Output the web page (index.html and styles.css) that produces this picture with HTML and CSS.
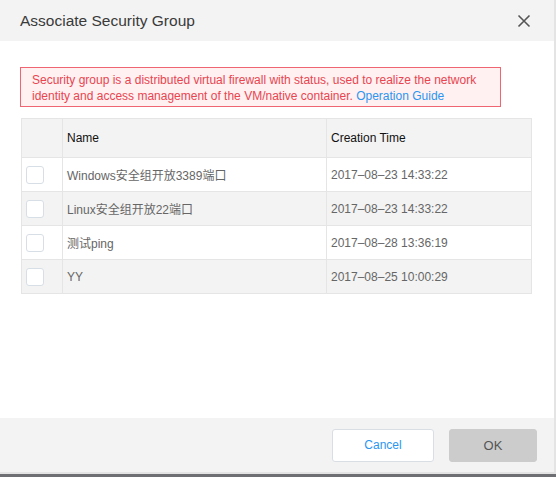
FILE: index.html
```html
<!DOCTYPE html>
<html>
<head>
<meta charset="utf-8">
<link rel="stylesheet" href="styles.css">
</head>
<body>
<div class="dialog">
  <div class="header">
    <span class="title">Associate Security Group</span>
    <svg class="close" width="14" height="14" viewBox="0 0 14 14"><path d="M1.5 1.5 L12.5 12.5 M12.5 1.5 L1.5 12.5" stroke="#555" stroke-width="1.6" fill="none"/></svg>
  </div>
  <div class="content">
    <p class="alert">Security group is a distributed virtual firewall with status, used to realize the network identity and access management of the VM/native container. <a class="link">Operation Guide</a></p>
    <div class="table">
      <div class="row head">
        <div class="cell chk"></div>
        <div class="cell name">Name</div>
        <div class="cell time">Creation Time</div>
      </div>
      <div class="row">
        <div class="cell chk"><span class="box"></span></div>
        <div class="cell name">Windows安全组开放3389端口</div>
        <div class="cell time">2017–08–23 14:33:22</div>
      </div>
      <div class="row alt">
        <div class="cell chk"><span class="box"></span></div>
        <div class="cell name">Linux安全组开放22端口</div>
        <div class="cell time">2017–08–23 14:33:22</div>
      </div>
      <div class="row">
        <div class="cell chk"><span class="box"></span></div>
        <div class="cell name">测试ping</div>
        <div class="cell time">2017–08–28 13:36:19</div>
      </div>
      <div class="row alt">
        <div class="cell chk"><span class="box"></span></div>
        <div class="cell name">YY</div>
        <div class="cell time">2017–08–25 10:00:29</div>
      </div>
    </div>
  </div>
  <div class="footer">
    <button class="btn cancel">Cancel</button>
    <button class="btn ok">OK</button>
  </div>
</div>
</body>
</html>
```

FILE: styles.css
```css
html, body {
  margin: 0;
  padding: 0;
}
body {
  background: #6d6f72;
  width: 556px;
  height: 477px;
  overflow: hidden;
  font-family: "Liberation Sans", Arial, "Noto Sans CJK SC", sans-serif;
}
.dialog {
  width: 554px;
  height: 472px;
  background: #fff;
  border-right: 2px solid #e4e4e4;
  border-bottom: 2px solid #e4e4e4;
  display: flex;
  flex-direction: column;
}
.header {
  height: 41px;
  background: #f3f3f3;
  display: flex;
  align-items: center;
  justify-content: space-between;
  padding: 0 23px 0 20px;
  flex-shrink: 0;
}
.title {
  font-size: 15.5px;
  color: #3a3a3a;
}
.close {
  display: block;
  margin-top: 1px;
}
.content {
  flex: 1;
  padding: 26px 24px 0 20px;
}
.alert {
  margin: 0;
  border: 1px solid #ef6571;
  background: #fff0f2;
  color: #e8454f;
  font-size: 12px;
  line-height: 16px;
  padding: 4px 10px 2px 11px;
  width: 458px;
}
.link {
  color: #2b96f0;
}
.table {
  margin-top: 11px;
  margin-left: 1px;
  width: 509px;
  border: 1px solid #e5e5e5;
  font-size: 12px;
}
.row {
  display: grid;
  grid-template-columns: 41px 264px 1fr;
  height: 33px;
  border-top: 1px solid #e5e5e5;
  background: #fff;
}
.row.head {
  height: 38px;
  border-top: none;
  background: #f3f3f3;
}
.row.alt {
  background: #f3f3f3;
}
.cell {
  display: flex;
  align-items: center;
  color: #666;
}
.head .cell {
  color: #111;
}
.cell.chk {
  border-right: 1px solid #e5e5e5;
  padding-left: 4px;
}
.cell.name {
  padding-left: 4px;
  border-right: 1px solid #e5e5e5;
}
.cell.time {
  padding-left: 4px;
}
.box {
  width: 16px;
  height: 16px;
  border: 1px solid #d8dee6;
  border-radius: 3px;
  background: #fff;
}
.footer {
  height: 54px;
  background: #f3f3f3;
  display: flex;
  align-items: center;
  justify-content: flex-end;
  padding-right: 17px;
  gap: 15px;
  flex-shrink: 0;
}
.btn {
  font-family: "Liberation Sans", Arial, sans-serif;
  font-size: 12px;
  height: 33px;
  border-radius: 3px;
  padding: 0;
}
.cancel {
  width: 102px;
  background: #fff;
  border: 1px solid #d9dee5;
  color: #2b96f0;
}
.ok {
  width: 88px;
  background: #cccccc;
  border: 1px solid #cccccc;
  color: #555;
  font-size: 13px;
}
```
